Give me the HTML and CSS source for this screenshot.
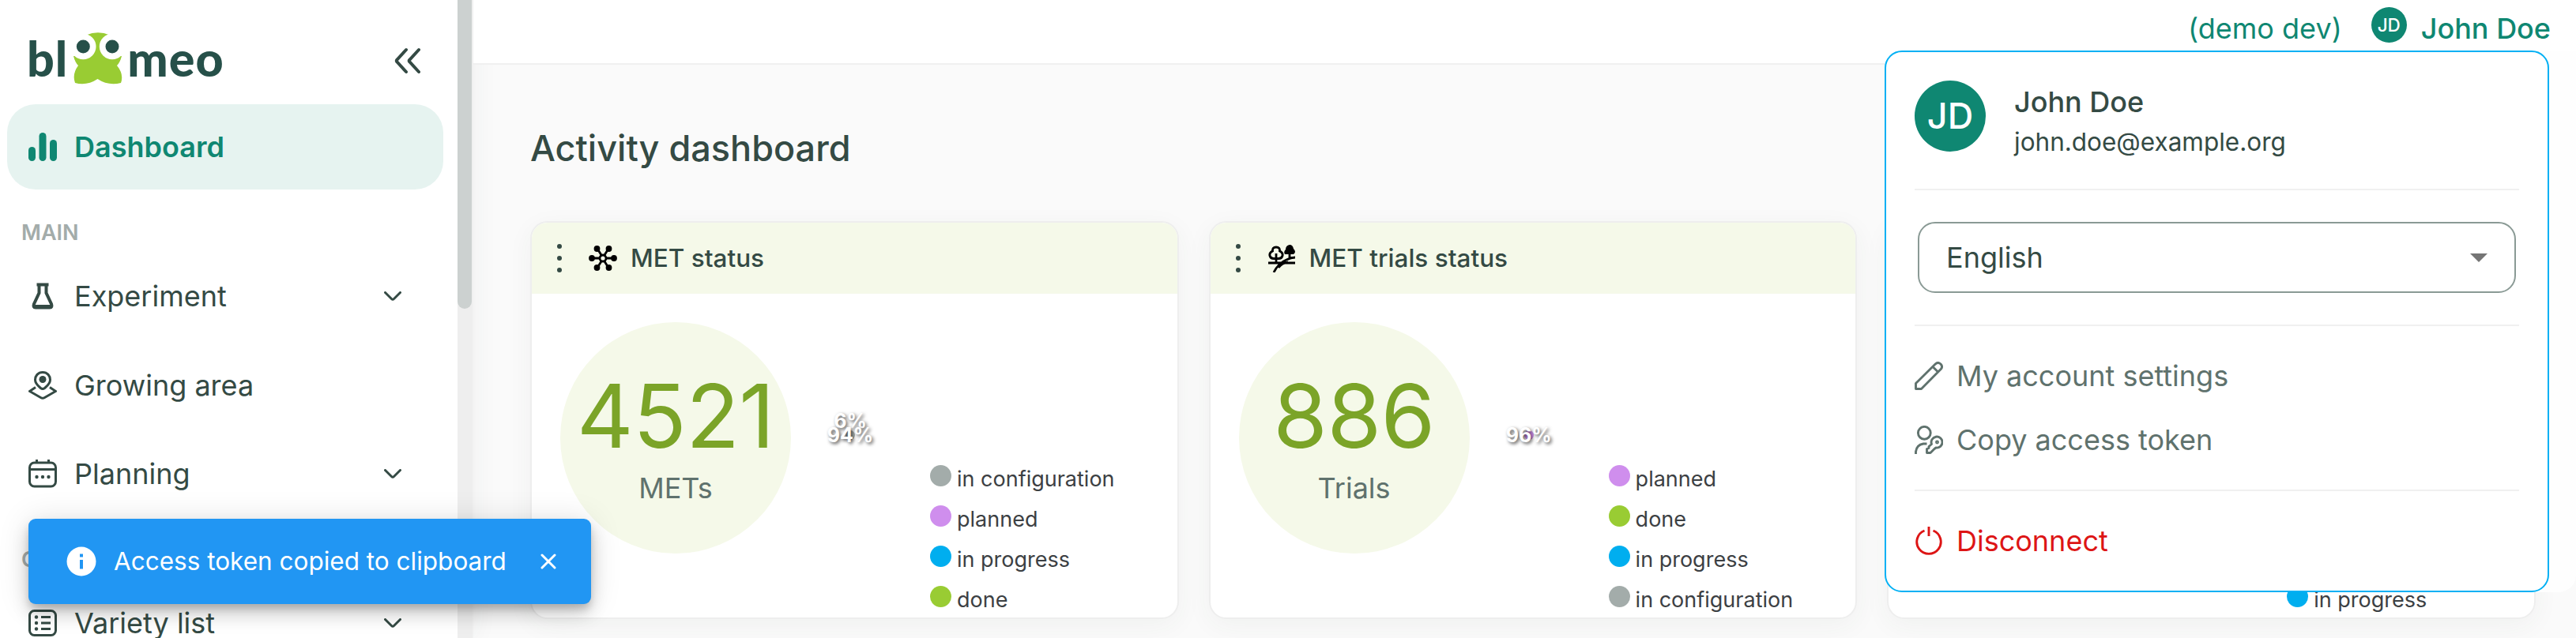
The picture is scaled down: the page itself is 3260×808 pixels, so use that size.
FILE: index.html
```html
<!DOCTYPE html>
<html lang="en">
<head>
    <meta charset="UTF-8">
    <meta name="viewport" content="width=device-width, initial-scale=1.0">
    <title>Bloomeo - Activity dashboard</title>
    <link rel="stylesheet" href="styles.css">
</head>
<body>
    <div class="app">
        <aside class="sidebar">
            <div class="sidebar-content">
                <div class="sidebar-top">
                    <div class="logo">
                        <span class="logo-text">bl</span>
                        <svg class="logo-flower" viewBox="0 0 62 66">
                            <path fill="#9c3" d="M16 3.500Q31-3 46 3.500L50 30L61 30Q59 38 55 42Q64 53 60 64Q44 68 30.500 59Q17 68 2 64Q-2 53 6 42Q2 38 0 30L12 30Z"/>
                            <circle cx="12.300" cy="18" r="16.200" fill="#fff"/>
                            <circle cx="49" cy="18" r="16.200" fill="#fff"/>
                            <circle cx="12.300" cy="18" r="8.500" fill="#265049"/>
                            <circle cx="49" cy="18" r="8.500" fill="#265049"/>
                        </svg>
                        <span class="logo-text">meo</span>
                    </div>
                    <svg class="collapse" viewBox="0 0 34 34">
                        <path d="M15 3L3.500 15.500Q2 17 3.500 18.500L15 31M31 3L19.500 15.500Q18 17 19.500 18.500L31 31"/>
                    </svg>
                </div>
                <a class="nav-item active">
                    <svg class="nav-icon solid" viewBox="0 0 36 36">
                        <rect x="0" y="18" width="9" height="18" rx="4.500"/>
                        <rect x="13.500" y="0" width="9" height="36" rx="4.500"/>
                        <rect x="27" y="9" width="9" height="27" rx="4.500"/>
                    </svg>
                    <span>Dashboard</span>
                </a>
                <div class="nav-title">MAIN</div>
                <a class="nav-item">
                    <svg class="nav-icon flask" viewBox="0 0 36 36">
                        <path d="M10.500 3.500H25.500M13.500 4V14L7 28Q5.500 32.500 9 32.500H27Q30.500 32.500 29 28L22.500 14V4M8 31H28"/>
                    </svg>
                    <span>Experiment</span>
                    <svg class="chevron" viewBox="0 0 22 12"><path d="M1.500 1.500L9.500 9.500Q11 11 12.500 9.500L20.500 1.500"/></svg>
                </a>
                <a class="nav-item">
                    <svg class="nav-icon" viewBox="0 0 36 36">
                        <path d="M18 1.500C12 1.500 8.500 6 8.500 11C8.500 16 12 18.500 15.500 21.500Q18 23.500 20.500 21.500C24 18.500 27.500 16 27.500 11C27.500 6 24 1.500 18 1.500ZM9 20.500L1.500 25.500L15.500 33.500Q18 35 20.500 33.500L34.500 25.500L27 20.500"/>
                        <circle class="fill" cx="18" cy="10.500" r="4.500"/>
                    </svg>
                    <span>Growing area</span>
                </a>
                <a class="nav-item">
                    <svg class="nav-icon" viewBox="0 0 36 36">
                        <rect x="1.500" y="4" width="33" height="30" rx="6"/>
                        <path d="M10.500 0V5M25.500 0V5M1.500 12.500H34.500"/>
                        <circle class="fill" cx="10.500" cy="22" r="2.200"/>
                        <circle class="fill" cx="18" cy="22" r="2.200"/>
                        <circle class="fill" cx="25.500" cy="22" r="2.200"/>
                    </svg>
                    <span>Planning</span>
                    <svg class="chevron" viewBox="0 0 22 12"><path d="M1.500 1.500L9.500 9.500Q11 11 12.500 9.500L20.500 1.500"/></svg>
                </a>
                <div class="nav-title catalog">CATALOG</div>
                <a class="nav-item">
                    <svg class="nav-icon" viewBox="0 0 36 36">
                        <rect x="1.500" y="2.500" width="33" height="31" rx="6"/>
                        <path d="M16 10.500H28M16 18H28M16 25.500H28"/>
                        <circle class="fill" cx="10" cy="10.500" r="2.200"/>
                        <circle class="fill" cx="10" cy="18" r="2.200"/>
                        <circle class="fill" cx="10" cy="25.500" r="2.200"/>
                    </svg>
                    <span>Variety list</span>
                    <svg class="chevron" viewBox="0 0 22 12"><path d="M1.500 1.500L9.500 9.500Q11 11 12.500 9.500L20.500 1.500"/></svg>
                </a>
            </div>
            <div class="scrollbar"><div class="thumb"></div></div>
        </aside>

        <main class="main">
            <header class="topbar">
                <span class="env">(demo dev)</span>
                <span class="avatar small">JD</span>
                <span class="user">John Doe</span>
            </header>
            <h1>Activity dashboard</h1>
            <div class="cards">
                <section class="card">
                    <div class="card-header">
                        <svg class="dots" viewBox="0 0 6 36"><circle cx="3" cy="3" r="3"/><circle cx="3" cy="18" r="3"/><circle cx="3" cy="33" r="3"/></svg>
                        <svg class="card-icon" viewBox="0 0 36 36">
                            <path fill="none" stroke="#000" stroke-width="2.800" d="M4 18H13M23 18H32M11 6L16 14M25 6L20 14M11 30L16 22M25 30L20 22"/>
                            <circle cx="18" cy="18" r="4" fill="none" stroke="#000" stroke-width="2.800"/>
                            <circle cx="4" cy="18" r="3.900"/><circle cx="32" cy="18" r="3.900"/>
                            <circle cx="10.500" cy="6" r="3.900"/><circle cx="25.500" cy="6" r="3.900"/>
                            <circle cx="10.500" cy="30" r="3.900"/><circle cx="25.500" cy="30" r="3.900"/>
                        </svg>
                        <span>MET status</span>
                    </div>
                    <div class="card-body">
                        <div class="total"><b>4521</b><span>METs</span></div>
                        <div class="chart">
                            <span class="percent upper">6%</span>
                            <i class="slice grey"></i>
                            <span class="percent">94%</span>
                        </div>
                        <ul class="legend">
                            <li><i class="grey"></i>in configuration</li>
                            <li><i class="purple"></i>planned</li>
                            <li><i class="blue"></i>in progress</li>
                            <li><i class="green"></i>done</li>
                        </ul>
                    </div>
                </section>
                <section class="card">
                    <div class="card-header">
                        <svg class="dots" viewBox="0 0 6 36"><circle cx="3" cy="3" r="3"/><circle cx="3" cy="18" r="3"/><circle cx="3" cy="33" r="3"/></svg>
                        <svg class="card-icon" viewBox="0 0 36 36">
                            <g fill="none" stroke="#000" stroke-width="2.800">
                                <path d="M11 4Q6 4 6.500 9Q2 11 3 15Q4 18.500 8 18.500H14Q18 18.500 19 15Q20 11 15.500 9Q16 4 11 4ZM11 12V24M1 24H35M28 10V18M8 36Q14 24 24 20Q30 17 35 17M14 30Q18 24 26 23"/>
                            </g>
                            <path d="M28 1Q23 2 23 7Q20 10 22 13H33Q37 10 33 6Q32 1 28 1Z"/>
                        </svg>
                        <span>MET trials status</span>
                    </div>
                    <div class="card-body">
                        <div class="total"><b>886</b><span>Trials</span></div>
                        <div class="chart">
                            <i class="slice purple"></i>
                            <span class="percent">96%</span>
                        </div>
                        <ul class="legend">
                            <li><i class="purple"></i>planned</li>
                            <li><i class="green"></i>done</li>
                            <li><i class="blue"></i>in progress</li>
                            <li><i class="grey"></i>in configuration</li>
                        </ul>
                    </div>
                </section>
                <section class="card">
                    <div class="card-header"></div>
                    <div class="card-body">
                        <ul class="legend">
                            <li><i class="blue"></i>in progress</li>
                        </ul>
                    </div>
                </section>
            </div>
        </main>
    </div>

    <div class="menu-wrapper">
        <div class="menu">
            <div class="profile">
                <span class="avatar">JD</span>
                <div>
                    <div class="profile-name">John Doe</div>
                    <div class="profile-mail">john.doe@example.org</div>
                </div>
            </div>
            <div class="language">
                <div class="select">
                    <span>English</span>
                    <svg class="caret" viewBox="0 0 22 11"><path d="M0 0H22L11 11Z"/></svg>
                </div>
            </div>
            <div class="menu-links">
                <a class="menu-item">
                    <svg viewBox="0 0 36 36"><path d="M1.500 34.500V27.500L26.500 2.800Q29.700 0 33 3Q36 6.300 33.200 9.500L8.500 34.500ZM23 6.500L29.500 13"/></svg>
                    <span>My account settings</span>
                </a>
                <a class="menu-item">
                    <svg viewBox="0 0 36 36"><circle cx="12.300" cy="9.300" r="7.900"/><path d="M1.500 36V33Q2.500 24.500 11 23H15.500M21.500 23.500A7 7 0 1 1 27 28L25 29.500L20 34.500H15.500V29.500L18 28.500V26.500Z"/><circle cx="28.500" cy="21" r="1"/></svg>
                    <span>Copy access token</span>
                </a>
            </div>
            <a class="menu-item disconnect">
                <svg viewBox="0 0 36 36"><path d="M18 0V12M12.500 5A15.200 15.200 0 1 0 23.500 5"/></svg>
                <span>Disconnect</span>
            </a>
        </div>
    </div>

    <div class="toast">
        <svg class="info" viewBox="0 0 38 38"><circle cx="19" cy="19" r="18.500" fill="#fff"/><path fill="#2196f3" d="M17 9.500H21V13.500H17ZM17 17H21V28.500H17Z"/></svg>
        <span>Access token copied to clipboard</span>
        <svg class="close" viewBox="0 0 20 20"><path d="M2 2L18 18M18 2L2 18"/></svg>
    </div>
</body>
</html>
```
FILE: styles.css
```css
* {
    box-sizing: border-box;
}

body {
    margin: 0;
    height: 808px;
    overflow: hidden;
    background: #fafafa;
    color: #344a44;
    font-family: Inter, sans-serif;
    font-size: 36px;
    line-height: 44px;
}

.app {
    display: flex;
    height: 808px;
    overflow: hidden;
}

/* Sidebar */
.sidebar {
    display: flex;
    flex: none;
    width: 599px;
    background: #fff;
    border-right: 2px solid #f0f0f0;
    box-shadow: 0 0 32px rgba(52, 74, 68, 0.06);
}

.sidebar-content {
    width: 579px;
    padding: 41px 18px 0 9px;
}

.scrollbar {
    width: 18px;
    background: #eee;
}

.thumb {
    height: 391px;
    background: #ccd1d0;
    border-radius: 0 0 9px 9px;
}

.sidebar-top {
    display: flex;
    justify-content: space-between;
    height: 91px;
    padding: 0 28px 0 25px;
}

.logo {
    display: flex;
    height: 66px;
    color: #265049;
}

.logo-text {
    font-family: Lato, sans-serif;
    font-size: 61px;
    font-weight: 900;
    letter-spacing: 1px;
    line-height: 66px;
}

.logo-flower {
    width: 62px;
    height: 66px;
    margin: 0 6px 0 7px;
}

.collapse {
    width: 34px;
    height: 34px;
    margin-top: 19px;
}

.collapse path, .chevron path {
    fill: none;
    stroke: #344a44;
    stroke-width: 4;
    stroke-linecap: round;
}

.nav-item {
    display: flex;
    align-items: center;
    height: 108px;
    margin-bottom: 4.5px;
    padding: 0 53px 0 27px;
    border-radius: 36px;
}

.nav-item.active {
    margin-bottom: 33px;
    background: #e6f3f0;
    color: #0f8772;
    font-weight: 600;
}

.nav-icon {
    width: 36px;
    height: 36px;
    margin-right: 22px;
    fill: none;
    stroke: currentColor;
    stroke-width: 3;
}

.nav-icon.flask {
    stroke-width: 4;
}

.nav-icon.solid, .nav-icon .fill {
    fill: currentColor;
    stroke: none;
}

.chevron {
    width: 22px;
    height: 12px;
    margin-left: auto;
}

.chevron path {
    stroke-width: 3;
}

.nav-title {
    height: 44px;
    margin-bottom: 4px;
    padding-left: 18px;
    color: #a3acaa;
    font-size: 27px;
    font-weight: 600;
}

.nav-title.catalog {
    margin-top: 33px;
}

/* Main area */
.main {
    flex: 1;
}

.topbar {
    display: flex;
    height: 82px;
    padding: 9px 32px 0 0;
    justify-content: flex-end;
    background: #fff;
    border-bottom: 2px solid #f0f0f0;
    color: #0f8772;
}

.env {
    padding-top: 5px;
}

.user {
    padding-top: 5px;
    font-weight: 500;
}

.avatar {
    display: flex;
    flex: none;
    align-items: center;
    justify-content: center;
    width: 90px;
    height: 90px;
    border-radius: 50%;
    background: #0f8772;
    color: #fff;
    font-size: 45px;
    font-weight: 500;
}

.avatar.small {
    width: 45px;
    height: 45px;
    margin: 0 18px 0 37px;
    font-size: 22.5px;
}

h1 {
    margin: 0;
    padding: 79px 0 65px 72px;
    font-size: 45px;
    font-weight: 500;
    line-height: 54px;
}

.cards {
    display: flex;
    gap: 38px;
    padding-left: 72px;
}

.card {
    width: 820.6px;
    height: 504px;
    border: 2px solid #eee;
    border-radius: 22px;
    background: #fff;
    box-shadow: 0 8px 32px rgba(52, 74, 68, 0.05);
    overflow: hidden;
}

.card-header {
    display: flex;
    align-items: center;
    height: 90px;
    padding-left: 32px;
    background: #f5f9e9;
    font-size: 31.5px;
    font-weight: 500;
}

.dots {
    width: 6px;
    height: 36px;
    margin-right: 34px;
    fill: #344a44;
}

.card-icon {
    width: 36px;
    height: 36px;
    margin-right: 17px;
}

.card-body {
    display: flex;
    height: 410px;
    padding: 36px 0 0 36px;
}

.total {
    display: flex;
    flex-direction: column;
    align-items: center;
    width: 292px;
    height: 293px;
    padding-top: 51px;
    border-radius: 50%;
    background: #f5f9e9;
    color: #5f726d;
}

.total b {
    color: #7ba428;
    font-size: 111px;
    font-weight: 400;
    letter-spacing: -0.5px;
    line-height: 136px;
}

.total span {
    margin-top: 1px;
}

.chart {
    display: grid;
    place-items: center;
    width: 150px;
    height: 286px;
}

.chart > * {
    grid-area: 1 / 1;
}

.percent {
    color: #fff;
    font-size: 25px;
    font-weight: 700;
    text-shadow: 2px 2px 4px rgba(0, 0, 0, 0.7);
}

.percent.upper {
    margin-bottom: 36px;
}

.slice {
    width: 12px;
    height: 12px;
    border-radius: 50%;
}

.legend {
    margin: 173px 0 0 26px;
    padding: 0;
    list-style: none;
    color: #3c4043;
    font-size: 27px;
    line-height: 51px;
}

.legend li {
    display: flex;
    height: 51px;
}

.legend i {
    width: 27px;
    height: 27px;
    margin: 8px 7px 0 0;
    border-radius: 50%;
}

.card:last-child .legend {
    margin: 326px 0 0 468px;
}

.grey {
    background: #a3acaa;
}

.purple {
    background: #cf8eed;
}

.blue {
    background: #00aeef;
}

.green {
    background: #9c3;
}

/* Account menu */
.menu-wrapper {
    position: absolute;
    top: 64px;
    right: 0;
    width: 875px;
    height: 686px;
    border-radius: 22px 0 22px 22px;
    background: #fefefe;
}

.menu {
    width: 841px;
    height: 686px;
    padding: 36px;
    border: 2px solid #00b0f4;
    border-radius: 22px;
    background: #fff;
}

.profile {
    display: flex;
    height: 139px;
    border-bottom: 2px solid #f0f0f0;
}

.profile > div {
    padding-left: 36px;
}

.profile-name {
    margin-top: 5px;
    font-weight: 500;
}

.profile-mail {
    margin-top: 7px;
    font-size: 31.5px;
}

.language {
    height: 172px;
    padding: 40px 4px 0;
    border-bottom: 2px solid #f0f0f0;
}

.select {
    display: flex;
    align-items: center;
    justify-content: space-between;
    height: 90px;
    padding: 0 34px;
    border: 2px solid #8a9a95;
    border-radius: 22px;
}

.caret {
    width: 22px;
    height: 11px;
    fill: #757575;
}

.menu-links {
    height: 209px;
    padding-top: 41px;
    border-bottom: 2px solid #f0f0f0;
}

.menu-item {
    display: flex;
    align-items: center;
    height: 44px;
    margin-bottom: 37px;
    color: #5f726d;
}

.menu-item svg {
    width: 36px;
    height: 36px;
    margin-right: 17px;
    fill: none;
    stroke: currentColor;
    stroke-width: 2.9;
    stroke-linejoin: round;
}

.menu-item.disconnect {
    margin-top: 41px;
    color: #dd1515;
}

/* Notification */
.toast {
    position: absolute;
    left: 36px;
    bottom: 43px;
    display: flex;
    align-items: center;
    width: 712px;
    height: 108px;
    padding: 0 44px 0 48px;
    border-radius: 9px;
    background: #2196f3;
    box-shadow: 0 7px 11px -2px rgba(0, 0, 0, 0.2), 0 13px 22px rgba(0, 0, 0, 0.14), 0 2px 40px rgba(0, 0, 0, 0.12);
    color: #fff;
    font-size: 31.5px;
}

.info {
    width: 38px;
    height: 38px;
    margin-right: 22px;
}

.close {
    width: 20px;
    height: 20px;
    margin-left: auto;
    stroke: #fff;
    stroke-width: 3;
    stroke-linecap: round;
}
```
